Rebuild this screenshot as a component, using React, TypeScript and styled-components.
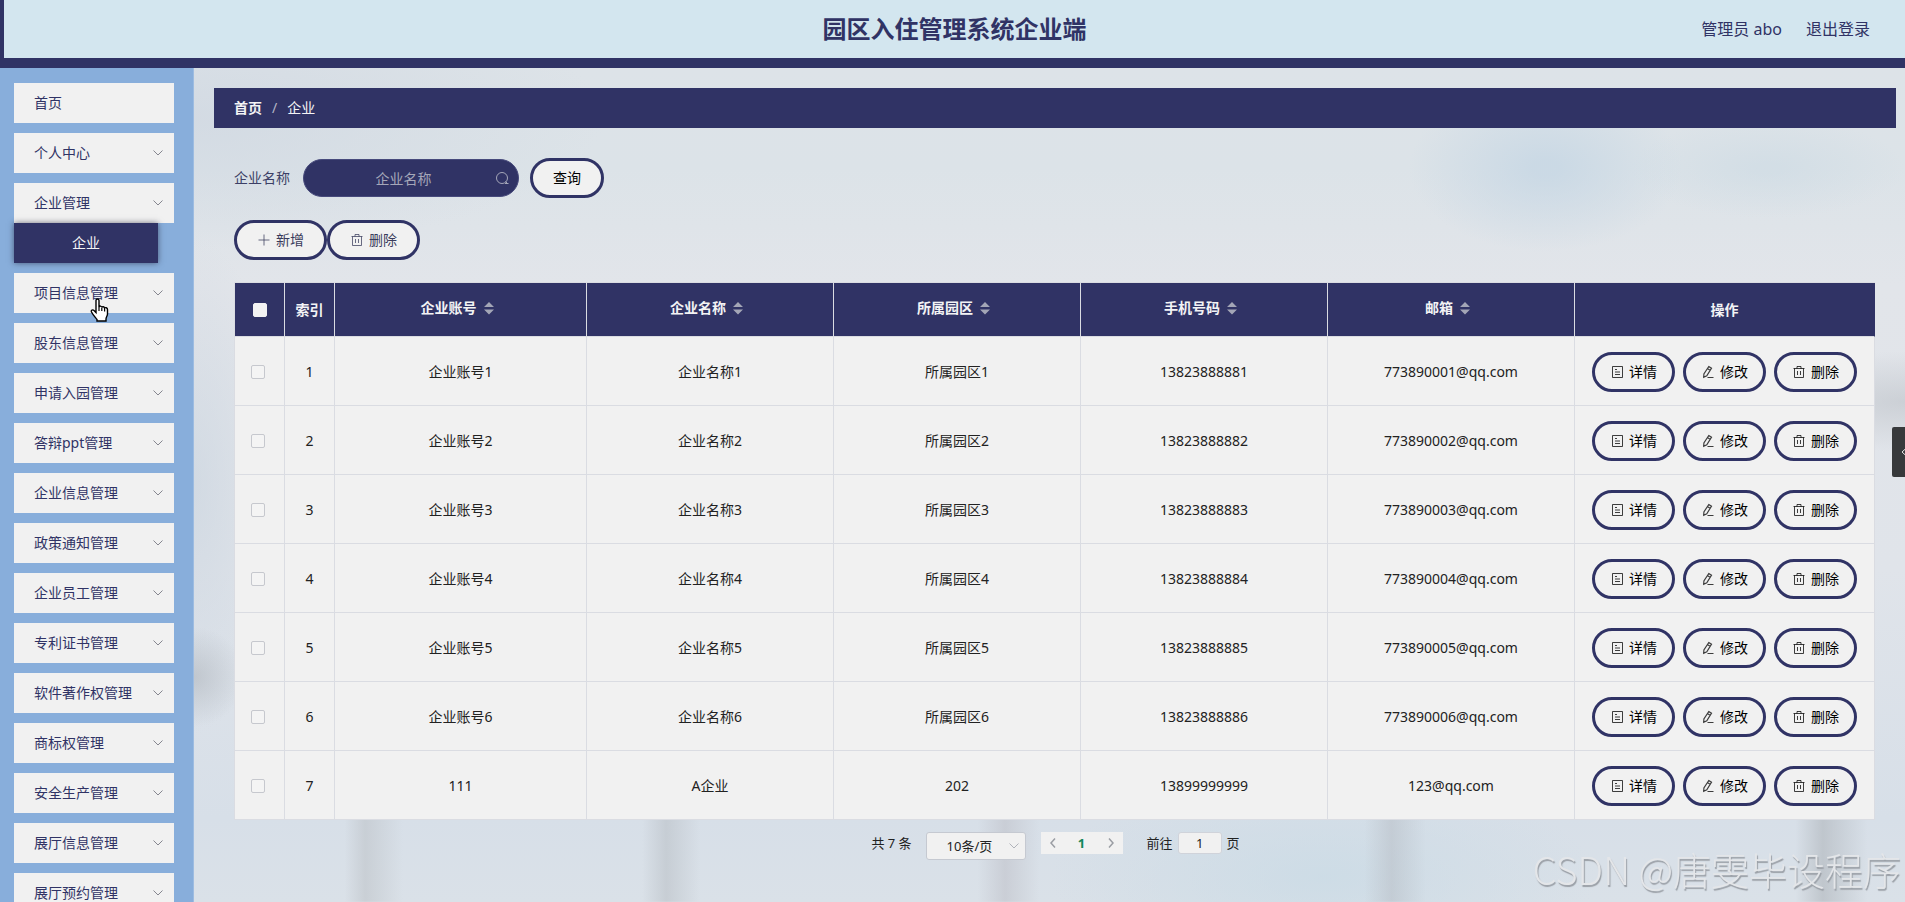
import React from "react";
import styled, { createGlobalStyle, css } from "styled-components";

const navy = "#303365";
const paper = "#f1f1f1";
const line = "#dadce2";

const GlobalStyle = createGlobalStyle`
  *, *::before, *::after { box-sizing: border-box; }
  body {
    margin: 0;
    font-family: "Noto Sans", "Noto Sans CJK SC", sans-serif;
    font-size: 14px;
    line-height: 20px;
    color: #222;
  }
  button, input, select { font: inherit; color: inherit; }
  button { cursor: pointer; }
  a { color: inherit; text-decoration: none; }
`;

const Shell = styled.div`
  height: 100vh;
  display: flex;
  flex-direction: column;
  overflow: hidden;
`;

const Header = styled.header`
  flex: none;
  display: grid;
  grid-template-columns: 1fr auto 1fr;
  align-items: center;
  height: 68px;
  background: #d3e6ef;
  border-left: 4px solid ${navy};
  border-bottom: 10px solid ${navy};
  color: ${navy};
`;

const Title = styled.h1`
  grid-column: 2;
  margin: 0;
  font-size: 24px;
  line-height: 32px;
  font-weight: 700;
`;

const Account = styled.div`
  display: flex;
  justify-content: flex-end;
  gap: 24px;
  padding-right: 35px;
  font-size: 16px;
  line-height: 24px;
`;

const Body = styled.div`
  flex: 1;
  min-height: 0;
  display: flex;
`;

const Sidebar = styled.nav`
  flex: none;
  width: 194px;
  padding: 15px 19px 0 14px;
  background: #88aedb;
  border-right: 1px solid #9dbce1;
  overflow-y: auto;
  scrollbar-width: none;
`;

const Menu = styled.ul`
  list-style: none;
  margin: 0;
  padding: 0;
  display: flex;
  flex-direction: column;
  gap: 10px;
`;

const MenuEntry = styled.li`
  position: relative;
`;

const MenuButton = styled.button`
  display: flex;
  align-items: center;
  justify-content: space-between;
  width: 100%;
  height: 40px;
  padding: 0 11px 1px 20px;
  border: 0;
  background: ${paper};
  color: ${navy};
`;

const SubLink = styled.a`
  display: block;
  width: 144px;
  height: 40px;
  line-height: 40px;
  text-align: center;
  background: ${navy};
  color: #f3f3f5;
  box-shadow: 0 0 6px rgba(30, 30, 50, 0.6);
`;

const Pointer = styled.svg`
  position: absolute;
  left: 76px;
  top: 25px;
  z-index: 2;
  pointer-events: none;
`;

const Main = styled.main`
  flex: 1;
  min-width: 0;
  overflow: hidden;
  padding: 20px 9px 0 20px;
  background-color: #dbe2e9;
  background-image:
    linear-gradient(90deg,
      transparent 8.8%, rgba(188, 193, 198, 0.55) 10%, transparent 12.2%,
      transparent 26.2%, rgba(184, 190, 196, 0.55) 27.6%, transparent 29.6%,
      transparent 45.8%, rgba(192, 194, 202, 0.6) 47.4%, transparent 49.4%,
      transparent 68.4%, rgba(184, 190, 198, 0.55) 70%, transparent 72%,
      transparent 93.6%, rgba(178, 184, 190, 0.65) 95.2%, transparent 97.8%),
    radial-gradient(ellipse 8% 10% at 79% 12%, rgba(197, 214, 228, 0.75) 10%, transparent 100%),
    radial-gradient(ellipse 8% 6% at 92% 12%, rgba(202, 217, 227, 0.5) 10%, transparent 100%),
    radial-gradient(ellipse 9% 6% at 100% 40%, rgba(186, 191, 197, 0.55), transparent 100%),
    radial-gradient(ellipse 3% 6% at 0% 73%, rgba(176, 182, 189, 0.6), transparent 100%),
    radial-gradient(ellipse 16% 12% at 66% 97%, rgba(200, 218, 229, 0.7), transparent 100%),
    radial-gradient(ellipse 24% 16% at 0% 6%, rgba(207, 215, 225, 0.7), transparent 100%),
    radial-gradient(ellipse 5% 30% at 0% 50%, rgba(200, 211, 222, 0.6), transparent 100%),
    linear-gradient(180deg, #dde3e8 0%, #dce3e8 12%, #e2e5ea 26%, #e0e4ea 60%, #d7dfe8 90%, #dae1e8 100%);
  background-repeat: no-repeat;
  background-position: 0 100%, 0 0;
  background-size: 100% 14%, 100% 100%, 100% 100%, 100% 100%, 100% 100%, 100% 100%, 100% 100%, 100% 100%, 100% 100%;
`;

const Breadcrumb = styled.nav`
  display: flex;
  align-items: center;
  gap: 10px;
  height: 40px;
  padding: 0 20px;
  background: ${navy};
  color: #f3f3f5;
  a { font-weight: 700; }
  i { color: #b4b7c6; font-style: normal; }
`;

const Content = styled.section`
  padding: 30px 21px 0 20px;
`;

const SearchForm = styled.form`
  display: flex;
  align-items: center;
  margin-bottom: 22px;
  color: #3c3f66;
`;

const SearchBox = styled.div`
  position: relative;
  margin: 0 11px 0 13px;
  svg {
    position: absolute;
    right: 9px;
    top: 12px;
  }
`;

const SearchInput = styled.input`
  display: block;
  width: 216px;
  height: 38px;
  padding: 0 30px 0 15px;
  border: 1px solid #474a7c;
  border-radius: 20px;
  background: ${navy};
  color: #fff;
  text-align: center;
  &::placeholder { color: #a5a7b9; opacity: 1; }
`;

const PillButton = styled.button<{ $tone?: "soft" | "strong"; $pad: number }>`
  display: inline-flex;
  align-items: center;
  gap: 5px;
  height: 40px;
  padding: 0 ${(p) => p.$pad}px;
  border: 3px solid ${navy};
  border-radius: 20px;
  background: ${paper};
  white-space: nowrap;
  color: ${(p) => (p.$tone === "soft" ? "#3a3c5c" : "#000")};
`;

const Toolbar = styled.div`
  display: flex;
  margin-bottom: 22px;
`;

const DataTable = styled.table`
  width: 100%;
  table-layout: fixed;
  border-collapse: separate;
  border-spacing: 0;
  border: 1px solid ${line};
  border-width: 1px 0 0 1px;
  text-align: center;
`;

const cell = css`
  padding: 0;
  border-right: 1px solid ${line};
  border-bottom: 1px solid ${line};
`;

const HeadCell = styled.th`
  ${cell}
  height: 54px;
  background: ${navy};
  color: #f3f3f5;
  font-weight: 700;
  &:last-child { border-right-color: ${navy}; }
`;

const Sortable = styled.div`
  display: flex;
  align-items: center;
  justify-content: center;
  padding-bottom: 3px;
  svg { width: 24px; height: 14px; }
`;

const DataCell = styled.td`
  ${cell}
  height: 69px;
  padding-top: 1px;
  background: ${paper};
  &:first-child { padding-right: 4px; }
`;

const CheckBox = styled.input<{ $head?: boolean }>`
  appearance: none;
  display: block;
  width: 14px;
  height: 14px;
  margin: 0 auto;
  border: 1px solid ${(p) => (p.$head ? "#f3f3f3" : "#c6c8ce")};
  border-radius: 2px;
  background: ${(p) => (p.$head ? "#f3f3f3" : "#f4f4f4")};
`;

const Actions = styled.div`
  display: flex;
  justify-content: center;
  gap: 8px;
`;

const Pagination = styled.nav`
  display: flex;
  justify-content: center;
  align-items: flex-start;
  margin-top: 12px;
  padding-left: 2px;
  font-size: 13px;
  line-height: 22px;
`;

const SizeBox = styled.div`
  position: relative;
  margin: 0 15px 0 14px;
  svg {
    position: absolute;
    right: 7px;
    top: 9px;
    pointer-events: none;
  }
`;

const SizeSelect = styled.select`
  appearance: none;
  display: block;
  width: 100px;
  height: 28px;
  padding: 0 20px;
  border: 1px solid #c5c9d1;
  border-radius: 3px;
  background: ${paper};
`;

const Pager = styled.div`
  display: flex;
  margin-right: 24px;
  background: ${paper};
`;

const PagerButton = styled.button<{ $current?: boolean }>`
  display: flex;
  align-items: center;
  justify-content: center;
  width: ${(p) => (p.$current ? 34 : 24)}px;
  height: 22px;
  padding: 0;
  border: 0;
  background: transparent;
  color: ${(p) => (p.$current ? "#12875a" : "#9a9da3")};
  font-weight: 700;
`;

const Jump = styled.label`
  display: flex;
  gap: 5px;
`;

const JumpInput = styled.input`
  width: 44px;
  height: 22px;
  padding: 0;
  border: 1px solid #d0d3da;
  border-radius: 3px;
  background: ${paper};
  text-align: center;
`;

const DrawerTab = styled.button`
  position: fixed;
  right: 0;
  top: 427px;
  width: 13px;
  height: 50px;
  padding: 0 0 0 9px;
  border: 0;
  border-radius: 2px 0 0 2px;
  background: #37393b;
  overflow: hidden;
  svg { display: block; }
`;

const Watermark = styled.div`
  position: fixed;
  right: 4px;
  bottom: 6px;
  font-family: "Noto Sans CJK SC", sans-serif;
  font-size: 38px;
  line-height: 54px;
  font-weight: 300;
  color: #e4e6e9;
  text-shadow: 1px 2px 1px #9a9fa6;
  white-space: nowrap;
  pointer-events: none;
`;

type IconName = "plus" | "trash" | "doc" | "edit";

const shapes: Record<IconName, React.ReactNode> = {
  plus: <path d="M7 1.5v11M1.5 7h11" />,
  trash: <path d="M1.5 3.5h11M5 3.5v-2h4v2M2.5 3.5v9h9v-9M5.5 6v4M8.5 6v4" />,
  doc: <path d="M2.500 1.500h10v11h-10zM5 4.500h2M5 7h5M5 9.500h5" />,
  edit: <path strokeWidth="1.2" d="M7.800 1.500l2.700 1.600-4.700 7.600-3.100 1.600.2-3.400zM6.600 3.800l2.600 1.500M6.500 12.500h6" />,
};

const Icon = ({ name }: { name: IconName }) => (
  <svg width="14" height="14" viewBox="0 0 14 14" fill="none" stroke="currentColor" strokeOpacity="0.75" aria-hidden="true">
    {shapes[name]}
  </svg>
);

const Chevron = ({ color = "#85868f" }: { color?: string }) => (
  <svg width="10" height="10" viewBox="0 0 10 10" fill="none" stroke={color} aria-hidden="true">
    <path d="M0.5 2.5L5 7l4.5-4.5" />
  </svg>
);

const menus = [
  "首页", "个人中心", "企业管理", "项目信息管理", "股东信息管理", "申请入园管理",
  "答辩ppt管理", "企业信息管理", "政策通知管理", "企业员工管理", "专利证书管理",
  "软件著作权管理", "商标权管理", "安全生产管理", "展厅信息管理", "展厅预约管理",
];

const columns = ["企业账号", "企业名称", "所属园区", "手机号码", "邮箱"];

const rows = [
  ...[1, 2, 3, 4, 5, 6].map((n) => [
    `企业账号${n}`, `企业名称${n}`, `所属园区${n}`, `1382388888${n}`, `77389000${n}@qq.com`,
  ]),
  ["111", "A企业", "202", "13899999999", "123@qq.com"],
];

export default function App() {
  return (
    <Shell>
      <GlobalStyle />
      <Header>
        <Title>园区入住管理系统企业端</Title>
        <Account>
          <span>管理员 abo</span>
          <a href="#logout">退出登录</a>
        </Account>
      </Header>
      <Body>
        <Sidebar aria-label="菜单">
          <Menu>
            {menus.map((name) => (
              <MenuEntry key={name}>
                <MenuButton type="button">
                  {name}
                  {name !== "首页" && <Chevron />}
                </MenuButton>
                {name === "企业管理" && <SubLink href="#company">企业</SubLink>}
                {name === "项目信息管理" && (
                  <Pointer width="19" height="24" viewBox="0 0 19 24" aria-hidden="true">
                    <path
                      d="M6 2.5c0-2 3-2 3 0V9c.3-1.400 2.700-1.200 2.800.5.500-1.200 2.700-1 2.800.7.700-1 2.900-.6 2.900 1.300v4.500c0 2-1.500 3-1.500 5V23H7v-1.500C5.500 19.500 3 17 1.500 14c-.8-1.700 1.200-2.800 2.500-1.500l2 2z"
                      fill="#fff" stroke="#000" strokeWidth="1.400"
                    />
                    <path d="M9 9v4M11.800 10v3M14.600 11v2.500" stroke="#000" strokeWidth="1.200" />
                  </Pointer>
                )}
              </MenuEntry>
            ))}
          </Menu>
        </Sidebar>
        <Main>
          <Breadcrumb aria-label="位置">
            <a href="#home">首页</a>
            <i>/</i>
            <span>企业</span>
          </Breadcrumb>
          <Content>
            <SearchForm onSubmit={(e) => e.preventDefault()}>
              <label htmlFor="company-name">企业名称</label>
              <SearchBox>
                <SearchInput id="company-name" placeholder="企业名称" />
                <svg width="15" height="15" viewBox="0 0 15 15" fill="none" stroke="#a5a7b9" aria-hidden="true">
                  <circle cx="7" cy="7" r="5.500" />
                  <path d="M10 12.500h3.500M10.500 10.500l2 2" />
                </svg>
              </SearchBox>
              <PillButton $pad={20} type="submit">查询</PillButton>
            </SearchForm>
            <Toolbar>
              <PillButton $pad={20} $tone="soft" type="button"><Icon name="plus" />新增</PillButton>
              <PillButton $pad={20} $tone="soft" type="button"><Icon name="trash" />删除</PillButton>
            </Toolbar>
            <DataTable>
              <colgroup>
                <col width="50" />
                <col width="50" />
                <col width="252" />
                <col /><col /><col /><col />
                <col width="300" />
              </colgroup>
              <thead>
                <tr>
                  <HeadCell><CheckBox $head type="checkbox" aria-label="全选" /></HeadCell>
                  <HeadCell>索引</HeadCell>
                  {columns.map((name) => (
                    <HeadCell key={name}>
                      <Sortable>
                        {name}
                        <svg viewBox="0 0 24 14" fill="#a3a6b6" aria-hidden="true">
                          <path d="M7 6l5-5 5 5zM7 8.500h10l-5 5z" />
                        </svg>
                      </Sortable>
                    </HeadCell>
                  ))}
                  <HeadCell>操作</HeadCell>
                </tr>
              </thead>
              <tbody>
                {rows.map((row, i) => (
                  <tr key={i}>
                    <DataCell><CheckBox type="checkbox" aria-label={`选择第${i + 1}行`} /></DataCell>
                    <DataCell>{i + 1}</DataCell>
                    {row.map((value) => <DataCell key={value}>{value}</DataCell>)}
                    <DataCell>
                      <Actions>
                        <PillButton $pad={15} type="button"><Icon name="doc" />详情</PillButton>
                        <PillButton $pad={15} type="button"><Icon name="edit" />修改</PillButton>
                        <PillButton $pad={15} type="button"><Icon name="trash" />删除</PillButton>
                      </Actions>
                    </DataCell>
                  </tr>
                ))}
              </tbody>
            </DataTable>
            <Pagination aria-label="分页">
              <span>共 7 条</span>
              <SizeBox>
                <SizeSelect aria-label="每页条数" defaultValue="10">
                  <option value="10">10条/页</option>
                  <option value="20">20条/页</option>
                </SizeSelect>
                <Chevron color="#b0b3ba" />
              </SizeBox>
              <Pager>
                <PagerButton type="button" aria-label="上一页">
                  <svg width="8" height="10" viewBox="0 0 8 10" fill="none" stroke="currentColor" strokeWidth="1.500"><path d="M6 0.500L2 5l4 4.500" /></svg>
                </PagerButton>
                <PagerButton type="button" $current>1</PagerButton>
                <PagerButton type="button" aria-label="下一页">
                  <svg width="8" height="10" viewBox="0 0 8 10" fill="none" stroke="currentColor" strokeWidth="1.500"><path d="M2 0.500L6 5 2 9.500" /></svg>
                </PagerButton>
              </Pager>
              <Jump>
                前往
                <JumpInput defaultValue="1" />
                页
              </Jump>
            </Pagination>
          </Content>
        </Main>
      </Body>
      <DrawerTab type="button" aria-label="展开">
        <svg width="8" height="10" viewBox="0 0 8 10" fill="none" stroke="#e6e6e6"><path d="M6 0.500L1 5l5 4.500" /></svg>
      </DrawerTab>
      <Watermark>CSDN @唐雯毕设程序</Watermark>
    </Shell>
  );
}
